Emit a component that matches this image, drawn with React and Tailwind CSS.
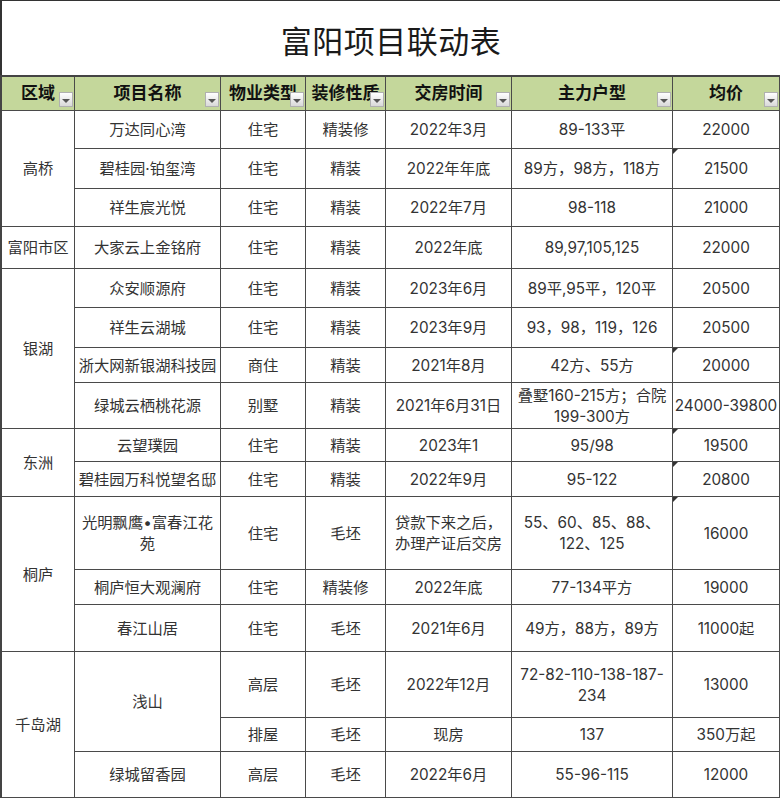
const headers = ["区域", "项目名称", "物业类型", "装修性质", "交房时间", "主力户型", "均价"];

// flat list of body cells in row-major order; span = rows covered
const cells = [
  { t: "高桥", span: 3 },
  { t: "万达同心湾" }, { t: "住宅" }, { t: "精装修" }, { t: "2022年3月" }, { t: "89-133平" }, { t: "22000" },
  { t: "碧桂园·铂玺湾" }, { t: "住宅" }, { t: "精装" }, { t: "2022年年底" }, { t: "89方，98方，118方" }, { t: "21500", mark: true },
  { t: "祥生宸光悦" }, { t: "住宅" }, { t: "精装" }, { t: "2022年7月" }, { t: "98-118" }, { t: "21000" },
  { t: "富阳市区" },
  { t: "大家云上金铭府" }, { t: "住宅" }, { t: "精装" }, { t: "2022年底" }, { t: "89,97,105,125" }, { t: "22000" },
  { t: "银湖", span: 4 },
  { t: "众安顺源府" }, { t: "住宅" }, { t: "精装" }, { t: "2023年6月" }, { t: "89平,95平，120平" }, { t: "20500" },
  { t: "祥生云湖城" }, { t: "住宅" }, { t: "精装" }, { t: "2023年9月" }, { t: "93，98，119，126" }, { t: "20500" },
  { t: "浙大网新银湖科技园" }, { t: "商住" }, { t: "精装" }, { t: "2021年8月" }, { t: "42方、55方" }, { t: "20000", mark: true },
  { t: "绿城云栖桃花源" }, { t: "别墅" }, { t: "精装" }, { t: "2021年6月31日" }, { t: ["叠墅160-215方；合院", "199-300方"] }, { t: "24000-39800" },
  { t: "东洲", span: 2 },
  { t: "云望璞园" }, { t: "住宅" }, { t: "精装" }, { t: "2023年1" }, { t: "95/98" }, { t: "19500", mark: true },
  { t: "碧桂园万科悦望名邸" }, { t: "住宅" }, { t: "精装" }, { t: "2022年9月" }, { t: "95-122" }, { t: "20800", mark: true },
  { t: "桐庐", span: 3 },
  { t: ["光明飘鹰•富春江花", "苑"] }, { t: "住宅" }, { t: "毛坯" }, { t: ["贷款下来之后，", "办理产证后交房"] }, { t: ["55、60、85、88、", "122、125"] }, { t: "16000", mark: true },
  { t: "桐庐恒大观澜府" }, { t: "住宅" }, { t: "精装修" }, { t: "2022年底" }, { t: "77-134平方" }, { t: "19000" },
  { t: "春江山居" }, { t: "住宅" }, { t: "毛坯" }, { t: "2021年6月" }, { t: "49方，88方，89方" }, { t: "11000起" },
  { t: "千岛湖", span: 3 },
  { t: "浅山", span: 2 }, { t: "高层" }, { t: "毛坯" }, { t: "2022年12月" }, { t: ["72-82-110-138-187-", "234"] }, { t: "13000" },
  { t: "排屋" }, { t: "毛坯" }, { t: "现房" }, { t: "137" }, { t: "350万起" },
  { t: "绿城留香园" }, { t: "高层" }, { t: "毛坯" }, { t: "2022年6月" }, { t: "55-96-115" }, { t: "12000" },
];

const spanClass = { 2: "row-span-2", 3: "row-span-3", 4: "row-span-4" };

function FilterButton() {
  return (
    <span className="absolute right-[1px] bottom-[3px] w-[14px] h-[15px] bg-linear-to-b from-white to-[#d9d9d9] border border-[#b0b0b0] flex items-center justify-center">
      <span className="mt-[3px] w-0 h-0 border-l-[4px] border-r-[4px] border-t-[4px] border-l-transparent border-r-transparent border-t-[#555]" />
    </span>
  );
}

function Cell({ cell }) {
  const lines = Array.isArray(cell.t) ? cell.t : [cell.t];
  return (
    <div
      className={`relative flex flex-col items-center justify-center text-center border-r border-b border-[#4a4a4a] px-[2px] leading-[21px] whitespace-nowrap ${spanClass[cell.span] || ""}`}
    >
      {lines.map((l, i) => (
        <span key={i}>{l}</span>
      ))}
      {cell.mark && (
        <span className="absolute left-0 top-0 w-0 h-0 border-t-[5px] border-r-[5px] border-t-[#333] border-r-transparent" />
      )}
    </div>
  );
}

export default function App() {
  return (
    <div className="w-[780px] h-[798px] bg-white overflow-hidden font-['Inter','Noto_Sans_CJK_SC',sans-serif] text-[#333]">
      <div className="h-[75px] border-t border-l-2 border-[#333] flex items-center justify-center">
        <h1 className="text-[31px] text-[#1a1a1a] tracking-[0.5px] mt-[4px] font-['Noto_Sans_CJK_SC',sans-serif]">富阳项目联动表</h1>
      </div>

      <div className="grid grid-cols-[73px_146px_85px_80px_126px_161px_107px] grid-rows-[34px_38px_40px_38px_42px_39px_40px_35px_46px_33px_35px_73px_35px_47px_66px_34px_46px] border-t-2 border-l-2 border-[#444] text-[15.3px]">
        {headers.map((h) => (
          <div
            key={h}
            className="relative flex items-center justify-center overflow-hidden whitespace-nowrap bg-[#c4d79b] border-r border-b border-[#4a4a4a] font-bold text-[17px] text-[#111]"
          >
            <span>{h}</span>
            <FilterButton />
          </div>
        ))}
        {cells.map((c, i) => (
          <Cell key={i} cell={c} />
        ))}
      </div>
    </div>
  );
}
